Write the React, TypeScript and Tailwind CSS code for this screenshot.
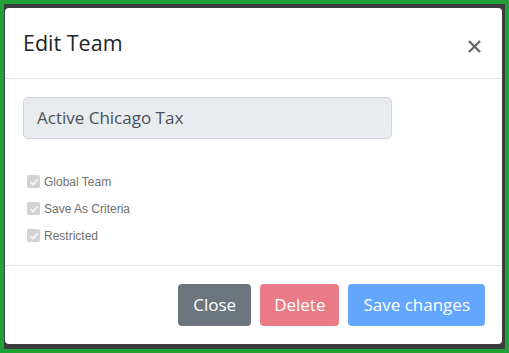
import React from "react";

function Check({ label }: { label: string }) {
  return (
    <label className="flex items-center h-[27px]">
      <span className="w-[13px] h-[13px] rounded-[2px] bg-[#d3d3d3] flex items-center justify-center">
        <svg width="10" height="10" viewBox="0 0 10 10">
          <path d="M1.5 5.2 L4 7.6 L8.6 2.4" stroke="#f4f4f4" strokeWidth="1.8" fill="none" />
        </svg>
      </span>
      <span className="ml-[4px] text-[12px] text-[#6f6f6f] font-['Liberation_Sans',Arial,sans-serif]">{label}</span>
    </label>
  );
}

export default function App() {
  return (
    <div className="w-[509px] h-[353px] border-4 border-[#21a035] bg-[#3c3c41] flex font-['Open_Sans',sans-serif]">
      <div className="mt-[4px] mb-[5px] ml-[1px] mr-[3px] flex-1 bg-white rounded-[4px] flex flex-col">
        <div className="h-[71px] border-b border-[#dee2e6] flex items-center justify-between pl-[18px] pr-[21px]">
          <div className="text-[21.5px] text-[#212529] leading-none">Edit Team</div>
          <svg width="13" height="13" viewBox="0 0 13 13" className="mt-[6px]">
            <path d="M1 1 L12 12 M12 1 L1 12" stroke="#666" strokeWidth="2.3" />
          </svg>
        </div>
        <div className="flex-1 pl-[18px] pt-[18px] border-b border-[#dee2e6]">
          <div className="w-[369px] h-[42px] bg-[#e9ecef] border border-[#ced4da] rounded-[5px] flex items-center pl-[13px] text-[17px] text-[#495057]">
            Active Chicago Tax
          </div>
          <div className="mt-[29px] pl-[4px] flex flex-col">
            <Check label="Global Team" />
            <Check label="Save As Criteria" />
            <Check label="Restricted" />
          </div>
        </div>
        <div className="h-[78px] flex items-center justify-end gap-[9px] pr-[17px] text-[17px] text-white">
          <div className="h-[42px] px-[15px] rounded-[4px] bg-[#6c757d] flex items-center">Close</div>
          <div className="h-[42px] px-[14px] rounded-[4px] bg-[#e87b86] flex items-center">Delete</div>
          <div className="h-[42px] px-[15px] rounded-[4px] bg-[#62a6fe] flex items-center">Save changes</div>
        </div>
      </div>
    </div>
  );
}
